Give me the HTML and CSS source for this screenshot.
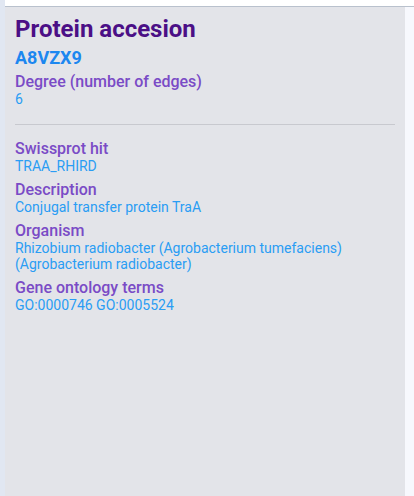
FILE: index.html
```html
<!DOCTYPE html>
<html>
<head>
<meta charset="utf-8">
<link rel="stylesheet" href="styles.css">
</head>
<body>
<div class="app">
  <div class="rail"></div>
  <div class="main">
    <div class="topbar"></div>
    <div class="content">
      <div class="panel">
        <h1 class="title">Protein accesion</h1>
        <div class="accession">A8VZX9</div>
        <div class="field field-first">
          <div class="label">Degree (number of edges)</div>
          <div class="value">6</div>
        </div>
        <hr class="divider">
        <div class="field">
          <div class="label">Swissprot hit</div>
          <div class="value">TRAA_RHIRD</div>
        </div>
        <div class="field">
          <div class="label">Description</div>
          <div class="value">Conjugal transfer protein TraA</div>
        </div>
        <div class="field">
          <div class="label">Organism</div>
          <div class="value">Rhizobium radiobacter (Agrobacterium tumefaciens) (Agrobacterium radiobacter)</div>
        </div>
        <div class="field">
          <div class="label">Gene ontology terms</div>
          <div class="value">GO:0000746 GO:0005524</div>
        </div>
      </div>
      <div class="side"></div>
    </div>
  </div>
</div>
</body>
</html>
```

FILE: styles.css
```css
html, body {
  margin: 0;
  padding: 0;
  height: 100%;
  overflow: hidden;
}
body {
  font-family: Roboto, "Noto Sans", sans-serif;
}
.app {
  display: flex;
  height: 496px;
}
.rail {
  width: 5px;
  background: #e1e7f2;
  flex: none;
}
.main {
  flex: 1;
  display: flex;
  flex-direction: column;
}
.topbar {
  height: 6px;
  background: #ffffff;
  border-bottom: 1px solid #b9c1cd;
  flex: none;
}
.content {
  flex: 1;
  display: flex;
}
.panel {
  width: 400px;
  background: #e3e4e9;
  padding: 7px 10px 0 10px;
  box-sizing: border-box;
}
.side {
  flex: 1;
  background: #f7f8fd;
}
.title {
  margin: 0;
  font-size: 24px;
  font-weight: 700;
  line-height: 30px;
  color: #4b0f86;
}
.accession {
  font-size: 18px;
  font-weight: 700;
  line-height: 22px;
  color: #1c87f0;
  margin-top: 3px;
}
.field {
  margin-top: 6px;
}
.field-first {
  margin-top: 3px;
}
.label {
  font-size: 16px;
  font-weight: 500;
  line-height: 19px;
  color: #7a4bc6;
}
.value {
  font-size: 14px;
  line-height: 16px;
  color: #2a9df4;
}
.divider {
  border: none;
  border-top: 1px solid #c8c9cf;
  margin: 17px 0 14px 0;
}
```
